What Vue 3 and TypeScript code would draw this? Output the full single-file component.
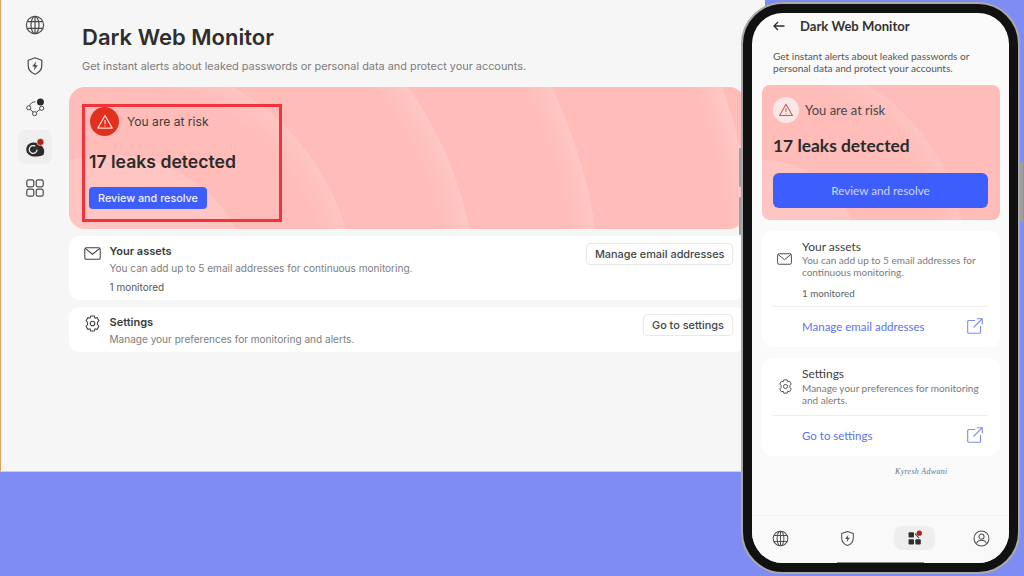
<script setup lang="ts">
type NavItem = {
  icon: string;
};

const sideItems: NavItem[] = [
  { icon: 'globe' },
  { icon: 'shield' },
  { icon: 'nodes' },
  { icon: 'swirl' },
  { icon: 'grid' },
];

const phoneNav: NavItem[] = [
  { icon: 'globe' },
  { icon: 'shield' },
  { icon: 'apps' },
  { icon: 'user' },
];
</script>

<template>
  <div class="stage">
    <svg class="sprites" width="0" height="0" aria-hidden="true">
      <symbol id="globe" viewBox="0 0 20 20">
        <g fill="none" stroke="currentColor" stroke-width="1.2">
          <circle cx="10" cy="10" r="8.6" />
          <ellipse cx="10" cy="10" rx="4" ry="8.6" />
          <path d="M2.4 6.6h15.2M2.4 13.4h15.2M10 1.4v17.2" />
        </g>
      </symbol>
      <symbol id="shield" viewBox="0 0 20 20">
        <path d="M10 1.8l6.8 2.4v5.4c0 4.2-3 7.2-6.8 8.6-3.8-1.4-6.8-4.4-6.8-8.6V4.2z" fill="none" stroke="currentColor" stroke-width="1.2" stroke-linejoin="round" />
        <path d="M11 5.6l-3.8 5h2.500l-.8 3.800 3.900-5.200h-2.500z" fill="currentColor" />
      </symbol>
      <symbol id="nodes" viewBox="0 0 24 24">
        <g fill="none" stroke="currentColor" stroke-width="1.2">
          <circle cx="4.500" cy="13" r="2.500" />
          <circle cx="11.500" cy="20" r="2.500" />
          <circle cx="20" cy="13.500" r="2.500" />
          <path d="M5.500 10.600C6.500 7.500 8.500 5.800 12.500 5.800M6.300 14.800l3.500 3.500M13.500 18.500l4.500-3.600" />
        </g>
        <circle cx="18.500" cy="6" r="4.200" fill="#2b2b2b" />
      </symbol>
      <symbol id="swirl" viewBox="0 0 24 24">
        <path d="M10 6.500c5 0 11 3 12.800 8.500.4 1.500.2 4.200-.8 6.500-3.500 1.500-7.500 2-12 1.800C5.500 23 1.500 19.500 1.500 15c0-4.700 3.800-8.500 8.500-8.500z" fill="#2b2b2b" />
        <path d="M14.500 15a4.700 4.700 0 1 1-2-3.900" fill="none" stroke="#f0f0f0" stroke-width="1.500" />
        <circle cx="18.500" cy="6" r="4.300" fill="#b3211e" stroke="#f0f0f0" stroke-width=".8" />
      </symbol>
      <symbol id="grid" viewBox="0 0 20 20">
        <g fill="none" stroke="currentColor" stroke-width="1.2">
          <rect x="1.800" y="1.800" width="7" height="7" rx="1.800" />
          <rect x="11.200" y="1.800" width="7" height="7" rx="1.800" />
          <rect x="1.800" y="11.200" width="7" height="7" rx="1.800" />
          <rect x="11.200" y="11.200" width="7" height="7" rx="1.800" />
        </g>
      </symbol>
      <symbol id="apps" viewBox="0 0 20 20">
        <g fill="#2e2e2e">
          <rect x="3" y="2.500" width="6.400" height="6.400" rx="1.200" />
          <rect x="3" y="10.800" width="6.400" height="6.400" rx="1.200" />
          <rect x="11" y="10.800" width="6.400" height="6.400" rx="1.200" />
          <path d="M10.800 3.500l5 6-1 .6-4-5z" />
        </g>
        <circle cx="15.600" cy="3.800" r="3.100" fill="#b3211e" />
      </symbol>
      <symbol id="user" viewBox="0 0 20 20">
        <g fill="none" stroke="currentColor" stroke-width="1.2">
          <circle cx="10" cy="10" r="8.800" />
          <circle cx="10" cy="7.800" r="3" />
          <path d="M4.200 16c.6-2.800 3-4 5.800-4s5.200 1.200 5.800 4" />
        </g>
      </symbol>
      <symbol id="mail" viewBox="0 0 18 14">
        <rect x=".7" y=".7" width="16.600" height="12.600" rx="1.800" fill="none" stroke="currentColor" stroke-width="1.100" />
        <path d="M1.200 1.500L9 7.800l7.800-6.300" fill="none" stroke="currentColor" stroke-width="1.100" />
      </symbol>
      <symbol id="gear" viewBox="0 0 20 20">
        <path d="M8 2.200h4l.6 2.200 2.200-.6 2 3.300-1.600 1.600v2.600l1.600 1.600-2 3.300-2.200-.6-.6 2.200H8l-.6-2.200-2.200.6-2-3.300 1.600-1.600V8.700L3.200 7.100l2-3.300 2.200.6z" fill="none" stroke="currentColor" stroke-width="1.100" stroke-linejoin="round" />
        <circle cx="10" cy="10" r="2.400" fill="none" stroke="currentColor" stroke-width="1.100" />
      </symbol>
      <symbol id="external" viewBox="0 0 16 16">
        <path d="M8 2.500H1.700a1 1 0 0 0-1 1v10.800a1 1 0 0 0 1 1h10.800a1 1 0 0 0 1-1V8M6.500 9.500L15.300.7M9.800.7h5.500v5.500" fill="none" stroke="currentColor" stroke-width="1.100" />
      </symbol>
      <symbol id="warning" viewBox="0 0 20 20">
        <path d="M10 2.800l8 14H2z" fill="none" stroke="currentColor" stroke-width="1.300" stroke-linejoin="round" />
        <path d="M10 7.800v4.600M10 14v1" fill="none" stroke="currentColor" stroke-width="1.300" />
      </symbol>
    </svg>

    <section class="window">
      <nav class="sidebar">
        <div
          v-for="item in sideItems"
          :key="item.icon"
          class="side-item"
          :class="{ active: item.icon === 'swirl' }"
        >
          <svg class="side-icon"><use :href="`#${item.icon}`" /></svg>
        </div>
      </nav>

      <main class="content">
        <h1 class="title">Dark Web Monitor</h1>
        <p class="subtitle">Get instant alerts about leaked passwords or personal data and protect your accounts.</p>

        <div class="hero">
          <div class="highlight">
            <div class="risk-row">
              <span class="risk-badge"><svg class="risk-icon"><use href="#warning" /></svg></span>
              <span class="risk-text">You are at risk</span>
            </div>
            <div class="leaks">17 leaks detected</div>
            <button class="review">Review and resolve</button>
          </div>
        </div>

        <div class="row">
          <svg class="row-mail"><use href="#mail" /></svg>
          <div class="row-body">
            <div class="row-title">Your assets</div>
            <div class="row-desc">You can add up to 5 email addresses for continuous monitoring.</div>
            <div class="row-count">1 monitored</div>
          </div>
          <button class="row-btn">Manage email addresses</button>
        </div>

        <div class="row">
          <svg class="row-gear"><use href="#gear" /></svg>
          <div class="row-body">
            <div class="row-title">Settings</div>
            <div class="row-desc">Manage your preferences for monitoring and alerts.</div>
          </div>
          <button class="row-btn">Go to settings</button>
        </div>
      </main>
    </section>

    <div class="phone">
      <span class="side-key key-a"></span>
      <span class="side-key key-b"></span>
      <span class="side-key key-c"></span>

      <div class="screen">
        <header class="p-header">
          <svg class="p-back" viewBox="0 0 12 10">
            <path d="M11.500 5H1M5 1L1 5l4 4" fill="none" stroke="#2b2b2b" stroke-width="1.300" />
          </svg>
          <span class="p-title">Dark Web Monitor</span>
        </header>
        <p class="p-desc">Get instant alerts about leaked passwords or personal data and protect your accounts.</p>

        <div class="p-hero">
          <div class="p-risk">
            <span class="p-badge"><svg class="p-warning"><use href="#warning" /></svg></span>
            <span class="p-risk-text">You are at risk</span>
          </div>
          <div class="p-leaks">17 leaks detected</div>
          <button class="p-review">Review and resolve</button>
        </div>

        <div class="p-card">
          <div class="p-info">
            <svg class="p-mail"><use href="#mail" /></svg>
            <div>
              <div class="p-card-title">Your assets</div>
              <div class="p-card-desc">You can add up to 5 email addresses for continuous monitoring.</div>
            </div>
          </div>
          <div class="p-count">1 monitored</div>
          <div class="p-link">
            <span>Manage email addresses</span>
            <svg class="p-external"><use href="#external" /></svg>
          </div>
        </div>

        <div class="p-card">
          <div class="p-info">
            <svg class="p-gear"><use href="#gear" /></svg>
            <div>
              <div class="p-card-title">Settings</div>
              <div class="p-card-desc settings-desc">Manage your preferences for monitoring and alerts.</div>
            </div>
          </div>
          <div class="p-link settings-link">
            <span>Go to settings</span>
            <svg class="p-external"><use href="#external" /></svg>
          </div>
        </div>

        <div class="signature">Kyresh Adwani</div>

        <nav class="p-nav">
          <div
            v-for="item in phoneNav"
            :key="item.icon"
            class="p-nav-item"
            :class="{ active: item.icon === 'apps' }"
          >
            <svg class="p-nav-icon"><use :href="`#${item.icon}`" /></svg>
          </div>
        </nav>
        <span class="home-bar"></span>
      </div>
    </div>
  </div>
</template>

<style scoped>
.stage {
  position: relative;
  width: 1024px;
  height: 576px;
  overflow: hidden;
  background: #7f8cf3;
  font-family: Inter, "Liberation Sans", sans-serif;
}

.sprites {
  position: absolute;
}

.window {
  display: flex;
  width: 765px;
  height: 472px;
  box-sizing: border-box;
  background: #f6f6f6;
  border-left: 1.5px solid #d9a760;
  border-bottom: 1px solid #c9cdf2;
}

.sidebar {
  display: flex;
  flex-direction: column;
  align-items: center;
  gap: 6.75px;
  width: 67.5px;
  padding-top: 8px;
}

.side-item {
  display: flex;
  align-items: center;
  justify-content: center;
  width: 34px;
  height: 34px;
  border-radius: 8px;
  color: #4a4a4a;
}

.side-item.active {
  background: #efefef;
}

.side-icon {
  width: 20px;
  height: 20px;
}

.content {
  flex: 1;
  padding: 24px 20px 0 0;
}

.title {
  margin: 0 0 0 13.5px;
  font-size: 22px;
  line-height: 27px;
  font-weight: 600;
  color: #2e2e2e;
}

.subtitle {
  margin: 7px 0 0 13.5px;
  font-size: 10.9px;
  line-height: 16px;
  color: #7c7c7c;
}

.hero {
  height: 142px;
  box-sizing: border-box;
  margin-top: 13px;
  padding: 17px 0 0 13px;
  border-radius: 16px;
  background-color: #ffbcb8;
  background-image: radial-gradient(
    circle at 41px 213px,
    rgba(255, 255, 255, 0.14) 0,
    rgba(255, 255, 255, 0.14) 145px,
    transparent 145.5px,
    transparent 216px,
    rgba(255, 255, 255, 0.14) 246px,
    transparent 246.5px,
    transparent 336px,
    rgba(255, 255, 255, 0.16) 366px,
    transparent 366.5px,
    transparent 462px,
    rgba(255, 255, 255, 0.16) 490px,
    transparent 490.5px,
    transparent 620px,
    rgba(255, 255, 255, 0.18) 648px,
    transparent 648.5px
  );
}

.highlight {
  width: 200px;
  height: 118px;
  box-sizing: border-box;
  padding: 0 0 0 4.5px;
  border: 3px solid #f2333c;
}

.risk-row {
  display: flex;
  align-items: center;
  gap: 8px;
  padding-left: 1px;
}

.risk-badge {
  display: flex;
  align-items: center;
  justify-content: center;
  width: 29px;
  height: 29px;
  border-radius: 50%;
  background: #e2301f;
  color: #ffd9d5;
}

.risk-icon {
  width: 18px;
  height: 18px;
}

.risk-text {
  font-size: 12.1px;
  color: #3d3d3d;
}

.leaks {
  margin-top: 15px;
  font-size: 17.6px;
  line-height: 22px;
  font-weight: 600;
  color: #2b2b2b;
}

.review {
  display: block;
  width: 118px;
  height: 22px;
  margin-top: 14px;
  padding: 0;
  border: none;
  border-radius: 4px;
  background: #3d5efc;
  color: #f2f4ff;
  font-family: inherit;
  font-size: 10.8px;
  font-weight: 500;
}

.row {
  display: flex;
  align-items: flex-start;
  margin-top: 7px;
  padding: 7px 12px 6px 15px;
  border-radius: 10px;
  background: #fff;
}

.row-mail {
  flex: none;
  width: 17px;
  height: 13px;
  margin-top: 4px;
}

.row-gear {
  flex: none;
  width: 19px;
  height: 19px;
  margin: 0 -1px;
}

.row-mail,
.row-gear {
  color: #404040;
}

.row-body {
  flex: 1;
  margin-left: 9px;
  padding-top: 1px;
}

.row-title {
  font-size: 11px;
  line-height: 14px;
  font-weight: 600;
  color: #3a3a3a;
}

.row-desc {
  margin-top: 3px;
  font-size: 10.05px;
  line-height: 14px;
  color: #7d7d7d;
}

.row-count {
  margin-top: 5px;
  font-size: 10px;
  line-height: 14px;
  color: #565656;
}

.row-btn {
  min-width: 90px;
  height: 22px;
  padding: 0 7.5px;
  border: 1px solid #e8e8e8;
  border-radius: 4px;
  background: #fff;
  color: #454545;
  font-family: inherit;
  font-size: 10.9px;
  font-weight: 500;
}

.phone {
  position: absolute;
  left: 741px;
  top: 2px;
  width: 279px;
  height: 572px;
  box-sizing: border-box;
  padding: 9px;
  border: 2px solid #a9a9a9;
  border-radius: 42px;
  background: #111;
}

.side-key {
  position: absolute;
  width: 2px;
  border-radius: 1px;
  background: #9e9e9e;
}

.key-a {
  left: -4px;
  top: 144px;
  height: 39px;
}

.key-b {
  left: -4px;
  top: 193px;
  height: 38px;
}

.key-c {
  right: -5px;
  top: 158px;
  width: 3px;
  height: 60px;
}

.screen {
  position: relative;
  display: flex;
  flex-direction: column;
  height: 100%;
  overflow: hidden;
  border-radius: 31px;
  background: #fafafa;
  font-family: Lato, "Open Sans", sans-serif;
}

.p-header {
  display: flex;
  align-items: center;
  gap: 15px;
  height: 16px;
  margin-top: 5px;
  padding-left: 21px;
}

.p-back {
  width: 12px;
  height: 10px;
}

.p-title {
  font-size: 13.1px;
  font-weight: 700;
  color: #333;
}

.p-desc {
  margin: 15.5px 30px 0 21px;
  font-size: 10.1px;
  line-height: 12.5px;
  color: #565656;
}

.p-hero {
  height: 135px;
  box-sizing: border-box;
  margin: 10.5px 9px 0 10px;
  padding: 12px 0 0 11px;
  border-radius: 8px;
  background-color: #ffbcb8;
  background-image: radial-gradient(
    circle at -2px 175px,
    rgba(255, 255, 255, 0.14) 0,
    rgba(255, 255, 255, 0.14) 100px,
    transparent 100.5px,
    transparent 180px,
    rgba(255, 255, 255, 0.12) 205px,
    transparent 205.5px
  );
}

.p-risk {
  display: flex;
  align-items: center;
  gap: 6px;
}

.p-badge {
  display: flex;
  align-items: center;
  justify-content: center;
  width: 26px;
  height: 26px;
  border-radius: 50%;
  background: #fbe8e6;
  color: #b5605f;
}

.p-warning {
  width: 16px;
  height: 16px;
}

.p-risk-text {
  font-size: 13px;
  color: #474747;
}

.p-leaks {
  margin-top: 11px;
  font-size: 17.4px;
  line-height: 24px;
  font-weight: 700;
  color: #2b2b2b;
}

.p-review {
  display: block;
  width: 215px;
  height: 35px;
  margin-top: 15px;
  padding: 0 0 2px;
  border: none;
  border-radius: 6px;
  background: #3d5efc;
  color: #cdd5fb;
  font-family: inherit;
  font-size: 11.7px;
}

.p-card {
  margin: 11px 9px 0 10px;
  padding: 9px 12px 0 11px;
  border-radius: 10px;
  background: #fff;
}

.p-info {
  display: flex;
  align-items: center;
  gap: 9px;
}

.p-mail {
  flex: none;
  width: 15px;
  height: 12px;
  margin: 0 1px 0 4px;
  color: #3f3f3f;
}

.p-gear {
  flex: none;
  width: 17px;
  height: 17px;
  margin: 0 -1px 0 4px;
  color: #4a4a4a;
}

.p-card-title {
  font-size: 12px;
  line-height: 14px;
  color: #414141;
}

.p-card-desc {
  font-size: 10px;
  line-height: 12px;
  color: #7a7a7a;
}

.settings-desc {
  margin-top: 1px;
}

.p-count {
  margin-top: 8px;
  padding-left: 29px;
  font-size: 9.8px;
  line-height: 14px;
  color: #5b6168;
}

.p-link {
  display: flex;
  align-items: center;
  justify-content: space-between;
  height: 41px;
  margin-top: 6px;
  padding: 0 5px 2px 29px;
  border-top: 1px solid #eee;
  box-sizing: border-box;
  color: #6272e8;
  font-size: 11.5px;
}

.settings-link {
  margin-top: 9px;
}

.p-external {
  width: 16px;
  height: 16px;
  color: #7d8cee;
}

.signature {
  margin-top: 10px;
  padding-left: 143px;
  font-family: "Liberation Serif", serif;
  font-style: italic;
  font-size: 8px;
  line-height: 12px;
  letter-spacing: 0.3px;
  color: #6d7390;
}

.p-nav {
  display: flex;
  gap: 26px;
  height: 48px;
  box-sizing: border-box;
  margin-top: auto;
  padding: 10px 0 0 7.5px;
  border-top: 1px solid #f1f1f1;
  background: #f9f9f9;
}

.p-nav-item {
  display: flex;
  align-items: center;
  justify-content: center;
  width: 41px;
  height: 24px;
  border-radius: 8px;
  color: #4f4f4f;
}

.p-nav-item.active {
  background: #eeeeee;
}

.p-nav-icon {
  width: 17px;
  height: 17px;
}

.home-bar {
  position: absolute;
  left: 85px;
  bottom: 0;
  width: 87px;
  height: 1.5px;
  background: #8a8a8a;
}
</style>
